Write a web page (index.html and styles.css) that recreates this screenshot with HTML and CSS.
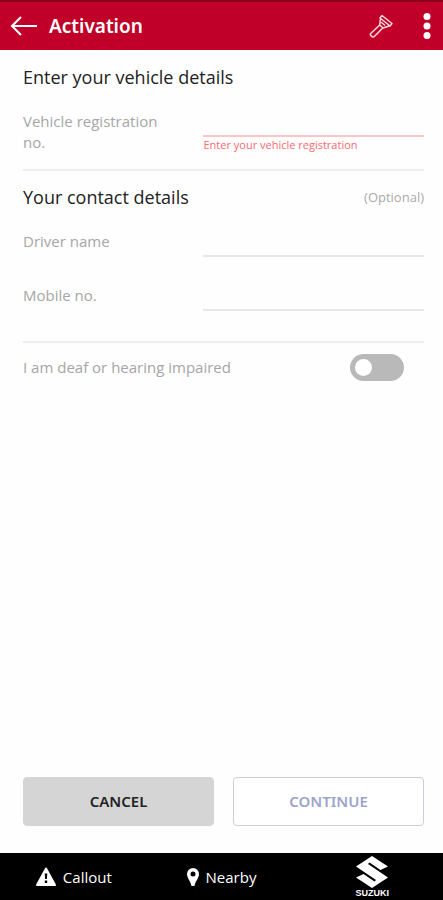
FILE: index.html
```html
<!DOCTYPE html>
<html lang="en">
<head>
<meta charset="utf-8">
<meta name="viewport" content="width=device-width, initial-scale=1">
<title>Activation</title>
<link rel="stylesheet" href="styles.css">
</head>
<body>
<header class="topbar">
  <button class="icon-button" type="button" aria-label="Back">
    <svg width="28" height="22" viewBox="0 0 28 22" fill="none" stroke="currentColor" stroke-width="2"><path d="M27 11H2M11 2L2 11l9 9"/></svg>
  </button>
  <h1 class="title">Activation</h1>
  <button class="icon-button torch" type="button" aria-label="Torch">
    <svg width="24" height="24" viewBox="0 0 24 24" fill="none" stroke="currentColor" stroke-width="1.5" stroke-linejoin="round" stroke-linecap="round"><path d="M13 1.500l10 8-2 2.500-10-8zM11.500 4.500l-.8 6.500-9 8.500q-.8 1.200.2 2.200l1.200 1q1.200.8 2.200-.2l8.500-8.500 6.500-2M10.700 11l3.400 3M12.500 8.500l3 2.500"/></svg>
  </button>
  <button class="icon-button" type="button" aria-label="More options">
    <svg width="8" height="28" viewBox="0 0 8 28" fill="currentColor"><circle cx="4" cy="4.500" r="3.500"/><circle cx="4" cy="14" r="3.500"/><circle cx="4" cy="23.500" r="3.500"/></svg>
  </button>
</header>
<main class="content">
  <form class="form">
    <section class="section">
      <h2 class="heading">Enter your vehicle details</h2>
      <div class="row">
        <label class="label" for="reg">Vehicle registration no.</label>
        <div>
          <input class="field field-error" id="reg" type="text" aria-describedby="reg-error">
          <p class="error" id="reg-error">Enter your vehicle registration</p>
        </div>
      </div>
    </section>
    <section class="section contact">
      <div class="heading-row">
        <h2 class="heading">Your contact details</h2>
        <span class="optional">(Optional)</span>
      </div>
      <div class="row">
        <label class="label" for="driver">Driver name</label>
        <input class="field" id="driver" type="text">
      </div>
      <div class="row">
        <label class="label" for="mobile">Mobile no.</label>
        <input class="field" id="mobile" type="tel">
      </div>
    </section>
    <div class="switch-row">
      <label class="label" for="deaf">I am deaf or hearing impaired</label>
      <input class="switch" id="deaf" type="checkbox" role="switch">
    </div>
    <div class="actions">
      <button class="button cancel" type="button">CANCEL</button>
      <button class="button continue" type="submit">CONTINUE</button>
    </div>
  </form>
</main>
<nav class="tabbar">
  <a class="tab" href="#callout">
    <svg width="20" height="19" viewBox="0 0 20 19"><path fill="currentColor" stroke="currentColor" stroke-width="2" stroke-linejoin="round" d="M10 1.500L19 18H1z"/><path fill="#000" d="M8.700 6.500h2.600l-.4 5.500H9.100zM8.800 13.500h2.400V16H8.800z"/></svg>
    Callout
  </a>
  <a class="tab" href="#nearby">
    <svg width="12" height="18" viewBox="0 0 12 18"><path fill="currentColor" fill-rule="evenodd" d="M6 0a6 6 0 0 1 6 6c0 4-3.500 7-4.500 12h-3C3.500 13 0 10 0 6a6 6 0 0 1 6-6zm0 3.500a2.500 2.500 0 1 0 0 5 2.500 2.500 0 0 0 0-5z"/></svg>
    Nearby
  </a>
  <a class="tab brand" href="#suzuki">
    <svg width="32" height="32" viewBox="0 0 32 32" fill="currentColor"><path d="M16 0L0 10.500l20 13.500-1.500 1.500L7.500 18 0 21.500 16 32l16-10.500L12 8l1.500-1.500L24.500 14 32 10.500z"/></svg>
    <span class="brand-name">SUZUKI</span>
  </a>
</nav>
</body>
</html>
```
FILE: styles.css
```css
* {
  box-sizing: border-box;
}

body {
  margin: 0;
  min-height: 100vh;
  display: flex;
  flex-direction: column;
  background: #fefefe;
  color: #222;
  font-family: "Open Sans", "Noto Sans", sans-serif;
  font-size: 15px;
}

h1,
h2,
p {
  margin: 0;
}

.topbar {
  display: flex;
  align-items: center;
  height: 50px;
  padding: 0 12px 0 10px;
  border-top: 2px solid #8e0019;
  background: #c00028;
  color: #fff;
}

.icon-button {
  display: flex;
  padding: 0;
  border: 0;
  background: none;
  color: inherit;
}

.title {
  flex: 1;
  margin-left: 11px;
  font-family: "Noto Sans", sans-serif;
  font-size: 19px;
  font-weight: 600;
  line-height: 26px;
}

.torch {
  margin-right: 30px;
  color: #ffd9dc;
}

.content {
  flex: 1;
  display: flex;
  padding: 16px 19px 27px 23px;
}

.form {
  flex: 1;
  display: flex;
  flex-direction: column;
}

.section {
  padding-bottom: 16px;
  margin-bottom: 15px;
  border-bottom: 2px solid #eee;
}

.contact {
  padding-bottom: 30px;
  margin-bottom: 11px;
}

.heading {
  font-size: 18px;
  font-weight: 500;
  line-height: 22px;
}

.heading-row {
  display: flex;
  justify-content: space-between;
  align-items: center;
}

.optional {
  color: #aaa;
  font-size: 13px;
}

.row {
  display: grid;
  grid-template-columns: 36% 55%;
  justify-content: space-between;
  margin-top: 23px;
}

.row + .row {
  margin-top: 28px;
}

.label {
  color: #a6a6a6;
  line-height: 21px;
}

.field {
  display: block;
  width: 100%;
  height: 26px;
  padding: 0;
  border: 0;
  border-bottom: 2px solid #e8e8e8;
  border-radius: 0;
  background: none;
  font: inherit;
  outline: none;
}

.field-error {
  border-color: #ffc4c6;
}

.error {
  color: #ff6870;
  font-size: 11px;
  line-height: 16px;
}

.switch-row {
  display: flex;
  justify-content: space-between;
  align-items: center;
  padding-right: 20px;
}

.switch {
  appearance: none;
  display: flex;
  align-items: center;
  width: 54px;
  height: 27px;
  margin: 0;
  padding: 5px;
  border-radius: 14px;
  background: #b9b9b9;
}

.switch::before {
  content: "";
  width: 17px;
  height: 17px;
  border-radius: 50%;
  background: #fff;
}

.switch:checked {
  justify-content: flex-end;
}

.actions {
  display: grid;
  grid-template-columns: 1fr 1fr;
  gap: 19px;
  margin-top: auto;
}

.button {
  height: 49px;
  padding-bottom: 2px;
  border: 1px solid #d5d5d5;
  border-radius: 4px;
  font-family: "Noto Sans", sans-serif;
  font-size: 15px;
  font-weight: 600;
}

.cancel {
  background: #d5d5d5;
  color: #222;
}

.continue {
  border-color: #ccccdf;
  background: #fff;
  color: #9ca4cc;
}

.tabbar {
  display: grid;
  grid-template-columns: repeat(3, 1fr);
  height: 47px;
  background: #000;
}

.tab {
  display: flex;
  justify-content: center;
  align-items: center;
  gap: 7px;
  color: #fff;
  text-decoration: none;
}

.brand {
  flex-direction: column;
  gap: 1px;
  padding-left: 6px;
}

.brand-name {
  font-family: "Liberation Sans", sans-serif;
  font-size: 9px;
  font-weight: 700;
  line-height: 8px;
}
```
